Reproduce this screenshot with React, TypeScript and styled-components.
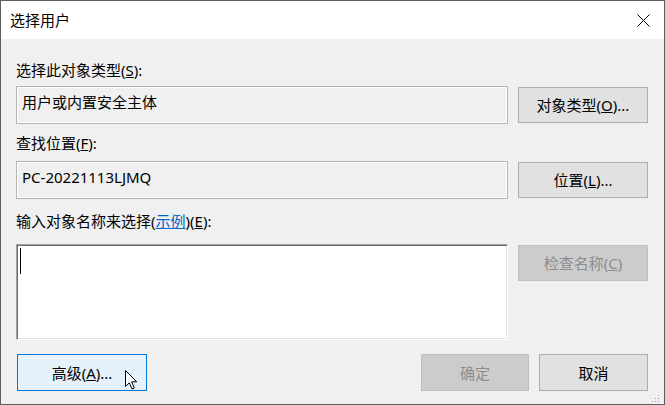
import React from 'react';
import styled, { createGlobalStyle } from 'styled-components';

const GlobalStyle = createGlobalStyle`
  html, body { margin: 0; padding: 0; background: #ffffff; }
  * { box-sizing: border-box; }
`;

const Window = styled.div`
  position: relative;
  width: 665px;
  height: 405px;
  border: 1px solid #5e5e5e;
  display: flex;
  flex-direction: column;
  background: #f0f0f0;
  font-family: "Noto Sans", "Noto Sans CJK SC", sans-serif;
  font-size: 15px;
  color: #000;
  overflow: hidden;
`;

const TitleBar = styled.div`
  height: 38px;
  flex: none;
  background: #ffffff;
  display: flex;
  align-items: center;
  justify-content: space-between;
  padding: 0 14px 0 9px;
`;

const TitleText = styled.div`
  font-size: 15px;
  line-height: 20px;
  color: #000;
`;

const CloseIcon = styled.svg`
  width: 13px;
  height: 13px;
  display: block;
`;

const Content = styled.div`
  flex: 1;
  display: flex;
  flex-direction: column;
  padding: 21px 16px 0 15px;
`;

const Label = styled.div<{ $mt?: number }>`
  height: 20px;
  line-height: 20px;
  white-space: nowrap;
  margin-top: ${(p) => p.$mt ?? 0}px;
`;

const Link = styled.span`
  color: #0066cc;
  text-decoration: underline;
`;

const FieldRow = styled.div<{ $mt: number }>`
  display: grid;
  grid-template-columns: 492px 130px;
  column-gap: 10px;
  align-items: start;
  margin-top: ${(p) => p.$mt}px;
`;

const ReadOnlyBox = styled.div`
  height: 38px;
  border: 1px solid #b4b4b4;
  box-shadow: inset 0 0 0 1px #ffffff;
  padding: 5px 5px;
  line-height: 20px;
  white-space: nowrap;
`;

const InputBox = styled.div`
  height: 96px;
  background: #ffffff;
  border-top: 1px solid #a0a0a0;
  border-left: 1px solid #a0a0a0;
  border-bottom: 1px solid #ffffff;
  border-right: 1px solid #ffffff;
  box-shadow: inset 1px 1px 0 #6d6d6d, inset -1px -1px 0 #e3e3e3;
  padding: 3px 0 0 3px;
`;

const Caret = styled.div`
  width: 1px;
  height: 26px;
  background: #000;
`;

type Variant = 'normal' | 'disabled' | 'hover';

const Button = styled.button<{ $variant?: Variant; $h?: number }>`
  height: ${(p) => p.$h ?? 36}px;
  margin-top: 1px;
  padding: 0;
  font-family: inherit;
  font-size: 15px;
  line-height: 20px;
  white-space: nowrap;
  border: 1px solid
    ${(p) => (p.$variant === 'disabled' ? '#bfbfbf' : p.$variant === 'hover' ? '#0078d7' : '#adadad')};
  background: ${(p) => (p.$variant === 'disabled' ? '#cccccc' : p.$variant === 'hover' ? '#e5f1fb' : '#e1e1e1')};
  color: ${(p) => (p.$variant === 'disabled' ? '#8c8c8c' : '#000000')};
`;

const Footer = styled.div`
  display: flex;
  align-items: start;
  gap: 10px;
  margin-top: 13px;
`;

const Spacer = styled.div`
  flex: 1;
`;

const FooterButton = styled(Button)<{ $w: number; $ml?: number }>`
  width: ${(p) => p.$w}px;
  margin-left: ${(p) => p.$ml ?? 0}px;
`;

const Pointer = styled.svg`
  position: absolute;
  left: 124px;
  top: 369px;
  width: 13px;
  height: 20px;
`;

const Grip = styled.svg`
  position: absolute;
  right: 4px;
  bottom: 1px;
  width: 8px;
  height: 8px;
`;

export default function App() {
  return (
    <>
      <GlobalStyle />
      <Window>
        <TitleBar>
          <TitleText>选择用户</TitleText>
          <CloseIcon viewBox="0 0 13 13">
            <path d="M0.5 0.5 L12.5 12.5 M12.5 0.5 L0.5 12.5" stroke="#000" strokeWidth="1" fill="none" />
          </CloseIcon>
        </TitleBar>
        <Content>
          <Label>
            选择此对象类型(<u>S</u>):
          </Label>
          <FieldRow $mt={6}>
            <ReadOnlyBox>用户或内置安全主体</ReadOnlyBox>
            <Button>
              对象类型(<u>O</u>)...
            </Button>
          </FieldRow>
          <Label $mt={9}>
            查找位置(<u>F</u>):
          </Label>
          <FieldRow $mt={8}>
            <ReadOnlyBox>PC-20221113LJMQ</ReadOnlyBox>
            <Button>
              位置(<u>L</u>)...
            </Button>
          </FieldRow>
          <Label $mt={12}>
            输入对象名称来选择(<Link>示例</Link>)(<u>E</u>):
          </Label>
          <FieldRow $mt={13}>
            <InputBox>
              <Caret />
            </InputBox>
            <Button $variant="disabled">
              检查名称(<u>C</u>)
            </Button>
          </FieldRow>
          <Footer>
            <FooterButton $variant="hover" $w={130} $ml={1} $h={37}>
              高级(<u>A</u>)...
            </FooterButton>
            <Spacer />
            <FooterButton $variant="disabled" $w={108} $h={37}>
              确定
            </FooterButton>
            <FooterButton $w={109} $h={37}>
              取消
            </FooterButton>
          </Footer>
        </Content>
        <Pointer viewBox="0 0 13 20">
          <path
            d="M0.5 0.5 L0.5 16.5 L4.3 12.8 L7 19 L9.3 18 L6.6 11.8 L11.8 11.8 Z"
            fill="#ffffff"
            stroke="#000000"
            strokeWidth="1"
            strokeLinejoin="miter"
          />
        </Pointer>
        <Grip viewBox="0 0 8 8">
          <rect x="6" y="0" width="1" height="1" fill="#a0a0a0" />
          <rect x="3" y="3" width="1" height="1" fill="#a0a0a0" />
          <rect x="6" y="3" width="1" height="1" fill="#a0a0a0" />
          <rect x="0" y="6" width="1" height="1" fill="#a0a0a0" />
          <rect x="3" y="6" width="1" height="1" fill="#a0a0a0" />
          <rect x="6" y="6" width="1" height="1" fill="#a0a0a0" />
        </Grip>
      </Window>
    </>
  );
}
